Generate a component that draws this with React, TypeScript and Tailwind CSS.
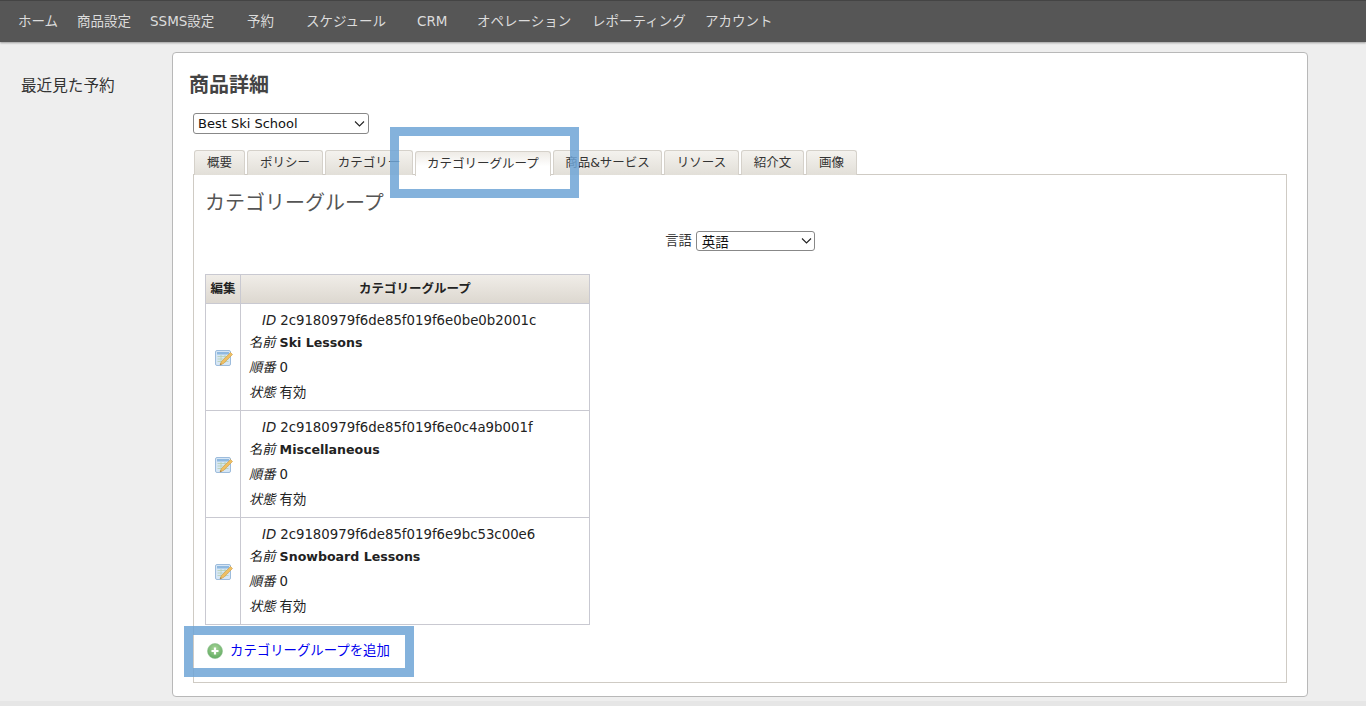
const font = { fontFamily: '"DejaVu Sans", "Noto Sans CJK JP", sans-serif' };

const navItems: [string, string][] = [
  ["ホーム", "ml-[18px] w-[59px]"],
  ["商品設定", "w-[73px]"],
  ["SSMS設定", "w-[97px]"],
  ["予約", "w-[59px]"],
  ["スケジュール", "w-[111px]"],
  ["CRM", "w-[60px]"],
  ["オペレーション", "w-[115px]"],
  ["レポーティング", "w-[113px]"],
  ["アカウント", "w-[80px]"],
];

const tabs: [string, string, boolean][] = [
  ["概要", "w-[51px]", false],
  ["ポリシー", "w-[76px]", false],
  ["カテゴリー", "w-[88px]", false],
  ["カテゴリーグループ", "w-[136px]", true],
  ["商品&サービス", "w-[109px]", false],
  ["リソース", "w-[75px]", false],
  ["紹介文", "w-[63px]", false],
  ["画像", "w-[51px]", false],
];

const rows = [
  ["2c9180979f6de85f019f6e0be0b2001c", "Ski Lessons"],
  ["2c9180979f6de85f019f6e0c4a9b001f", "Miscellaneous"],
  ["2c9180979f6de85f019f6e9bc53c00e6", "Snowboard Lessons"],
];

function EditIcon() {
  return (
    <svg width="18" height="18" viewBox="0 0 18 18">
      <rect x="0.5" y="1.5" width="15" height="15" rx="1.5" fill="#d6e6f5" stroke="#9dbcdc" />
      <rect x="2" y="3" width="12" height="2.5" fill="#8fb9e0" />
      <path d="M2.5 7.5h11M2.5 10h11M2.5 12.500h11M6 6v8M10 6v8" stroke="#b5cfb0" strokeWidth="0.8" />
      <path d="M15.500 3.500 L17.500 5.500 L8.500 14.500 L5 16 L6.500 12.500 Z" fill="#efc062" stroke="#cf9a45" strokeWidth="0.6" />
      <path d="M5 16 L5.700 14.300 L6.700 15.300 Z" fill="#8a6a3a" />
    </svg>
  );
}

function AddIcon() {
  return (
    <svg width="16" height="16" viewBox="0 0 16 16">
      <defs>
        <radialGradient id="addg" cx="50%" cy="35%" r="65%">
          <stop offset="0%" stopColor="#a9d69a" />
          <stop offset="100%" stopColor="#62ab62" />
        </radialGradient>
      </defs>
      <circle cx="8" cy="8" r="7.500" fill="url(#addg)" stroke="#8fc08f" strokeWidth="0.6" />
      <path d="M8 4.500v7M4.500 8h7" stroke="#ffffff" strokeWidth="2.200" />
    </svg>
  );
}

function Chevron({ right }: { right: string }) {
  return (
    <svg
      className={`pointer-events-none absolute top-1/2 -translate-y-1/2 ${right}`}
      width="11"
      height="7"
      viewBox="0 0 11 7"
    >
      <path d="M1 1 L5.500 5.500 L10 1" fill="none" stroke="#222" strokeWidth="1.100" />
    </svg>
  );
}

function Field({ label, children, first }: { label: string; children: React.ReactNode; first?: boolean }) {
  return (
    <div className={`whitespace-nowrap ${first ? "h-[19px] leading-[20px] pl-[13px]" : "h-[25px] leading-[25px]"}`}>
      <i className="mr-[4px]">{label}</i>
      {children}
    </div>
  );
}

function Row({ id, name }: { id: string; name: string }) {
  return (
    <tr className="h-[107px]">
      <td className="border border-[#c9c9d1] text-center align-middle p-0">
        <span className="inline-flex align-middle ml-[1px]">
          <EditIcon />
        </span>
      </td>
      <td className="border border-[#c9c9d1] px-[8px] pt-[1px] align-top text-[13.300px] text-[#222]">
        <div className="pt-[6px]">
          <Field label="ID" first>{id}</Field>
          <Field label="名前"><b className="text-[12.600px]">{name}</b></Field>
          <Field label="順番">0</Field>
          <Field label="状態">有効</Field>
        </div>
      </td>
    </tr>
  );
}

export default function App() {
  return (
    <div className="relative h-[706px] w-[1366px] overflow-hidden bg-[#eeeeee] text-[#333]" style={font}>
      <nav className="flex h-[42px] items-center bg-[#565656] border-t border-[#444] shadow-[0_1px_2px_rgba(0,0,0,0.35)] text-[13.500px] text-[#dcdcdc]">
        {navItems.map(([t, c]) => (
          <span key={t} className={`${c} shrink-0 whitespace-nowrap`}>{t}</span>
        ))}
      </nav>

      <div className="flex pt-[10px]">
        <aside className="w-[172px] shrink-0 pl-[21px] pt-[24px] text-[15.600px] leading-[20px] text-[#333]">
          最近見た予約
        </aside>

        <main className="h-[645px] w-[1136px] shrink-0 rounded-[4px] border border-[#b8b8b8] bg-white pl-[17px] pt-[19px]">
          <h1 className="-ml-px h-[26px] text-[20px] leading-[26px] font-bold text-[#444]">商品詳細</h1>

          <div className="pl-[3px] pt-[15px]">
            <div className="relative w-[176px]">
              <select
                className="block h-[21px] w-[176px] appearance-none rounded-[3px] border border-[#888] bg-white pl-[4px] text-[13px] text-[#111]"
                defaultValue="a"
              >
                <option value="a">Best Ski School</option>
              </select>
              <Chevron right="right-[4px]" />
            </div>
          </div>

          <div className="flex items-end gap-[2px] pl-[4px] h-[41px]">
            {tabs.map(([t, w, active]) => (
              <div
                key={t}
                className={`${w} flex items-center justify-center rounded-t-[3px] border border-b-0 border-[#d5d1ca] text-[12.500px] whitespace-nowrap text-[#333] ${
                  active
                    ? "relative z-10 -mb-px h-[25px] bg-gradient-to-b from-[#eeebe6] to-white to-60%"
                    : "h-[25px] bg-gradient-to-b from-[#f4f2ee] to-[#e2dfd8]"
                }`}
              >
                {t}
              </div>
            ))}
          </div>

          <section className="h-[509px] w-[1094px] -mt-px ml-[3px] border border-[#cfcbc4] pl-[11px] pt-[15px]">
            <h2 className="h-[26px] text-[20px] leading-[26px] font-normal text-[#555]">カテゴリーグループ</h2>

            <div className="flex items-center justify-center gap-[4px] pt-[15px] pr-[20px] pl-[2px] text-[13.300px] text-[#333]">
              <span className="ml-[7px]">言語</span>
              <div className="relative w-[119px]">
                <select
                  className="block h-[20px] w-[119px] appearance-none rounded-[3px] border border-[#888] bg-white pl-[5px] text-[13.500px] text-[#111]"
                  defaultValue="a"
                >
                  <option value="a">英語</option>
                </select>
                <Chevron right="right-[3px]" />
              </div>
            </div>

            <table className="mt-[23px] w-[385px] table-fixed border-collapse">
              <colgroup>
                <col className="w-[35px]" />
                <col />
              </colgroup>
              <thead>
                <tr className="h-[29px] bg-gradient-to-b from-[#f0ede8] to-[#dcd7cf] text-[12.500px] text-[#222]">
                  <th className="border border-[#c9c9d1] p-0 font-bold">編集</th>
                  <th className="border border-[#c9c9d1] p-0 font-bold">カテゴリーグループ</th>
                </tr>
              </thead>
              <tbody>
                {rows.map(([id, name]) => (
                  <Row key={id} id={id} name={name} />
                ))}
              </tbody>
            </table>

            <div className="flex items-center gap-[7px] pl-[2px] pt-[17px]">
              <AddIcon />
              <a className="text-[13.400px] leading-[18px] text-[#0000ee]">カテゴリーグループを追加</a>
            </div>
          </section>
        </main>
      </div>

      <div className="absolute left-[390px] top-[127px] h-[71px] w-[189px] border-[9px] border-[#6ea5d6]/85" />
      <div className="absolute left-[184px] top-[626px] h-[51px] w-[230px] border-[9px] border-[#6ea5d6]/85" />
      <div className="absolute inset-x-0 bottom-0 h-[5px] bg-[#e6e6e6]" />
    </div>
  );
}
